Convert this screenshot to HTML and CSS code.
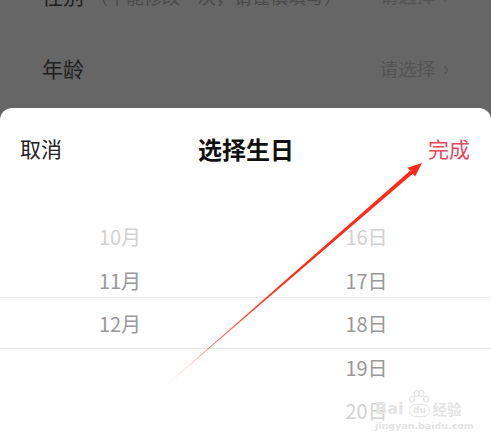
FILE: index.html
```html
<!DOCTYPE html>
<html lang="zh">
<head>
<meta charset="utf-8">
<link rel="stylesheet" href="styles.css">
</head>
<body>
<div class="backdrop">
  <div class="list">
    <div class="row">
      <span class="label">性别<span class="hint">（不能修改一次，请谨慎填写）</span></span>
      <span class="value">请选择<span class="chev">›</span></span>
    </div>
    <div class="row">
      <span class="label">年龄</span>
      <span class="value">请选择<span class="chev">›</span></span>
    </div>
  </div>
</div>
<div class="sheet">
  <div class="header">
    <span class="cancel">取消</span>
    <span class="title">选择生日</span>
    <span class="done">完成</span>
  </div>
  <div class="picker">
    <div class="col">
      <div class="item faint">10月</div>
      <div class="item">11月</div>
      <div class="item">12月</div>
    </div>
    <div class="col">
      <div class="item faint">16日</div>
      <div class="item">17日</div>
      <div class="item">18日</div>
      <div class="item">19日</div>
      <div class="item faint">20日</div>
    </div>
    <div class="band"></div>
  </div>
</div>
<div class="watermark">
  <div class="wm-top">
    <span class="wm-bai">Bai</span>
    <span class="wm-du">
      <svg class="paw" width="22" height="15" viewBox="0 0 22 15">
        <ellipse cx="4" cy="10" rx="2.4" ry="3" fill="none" stroke="#e4e4e4" stroke-width="1.2"/>
        <ellipse cx="8.5" cy="4.5" rx="2.4" ry="3" fill="none" stroke="#e4e4e4" stroke-width="1.2"/>
        <ellipse cx="13.5" cy="4.5" rx="2.4" ry="3" fill="none" stroke="#e4e4e4" stroke-width="1.2"/>
        <ellipse cx="18" cy="10" rx="2.4" ry="3" fill="none" stroke="#e4e4e4" stroke-width="1.2"/>
      </svg>
      <span class="du">du</span>
    </span>
    <span class="wm-cn">经验</span>
  </div>
  <div class="wm-url">jingyan.baidu.com</div>
</div>
<svg class="arrow" width="491" height="442" viewBox="0 0 491 442">
  <defs>
    <linearGradient id="g" gradientUnits="userSpaceOnUse" x1="155" y1="395" x2="412" y2="172">
      <stop offset="0" stop-color="#ff2a1a" stop-opacity="0"/>
      <stop offset="0.25" stop-color="#ff2a1a" stop-opacity="0.7"/>
      <stop offset="0.5" stop-color="#ff2a1a" stop-opacity="1"/>
      <stop offset="1" stop-color="#ff2a1a" stop-opacity="1"/>
    </linearGradient>
  </defs>
  <polygon points="155,395 413,173.6 410,170.8" fill="url(#g)"/>
  <polygon points="422,163 415.2,176.6 407.5,167.8" fill="#ff2a1a"/>
</svg>
</body>
</html>
```
FILE: styles.css
```css
html, body {
  margin: 0;
  padding: 0;
}
body {
  width: 491px;
  height: 442px;
  overflow: hidden;
  background: #666666;
  font-family: "Noto Sans CJK SC", "Noto Sans", sans-serif;
  position: relative;
}
.backdrop {
  height: 108px;
  overflow: hidden;
}
.list {
  margin-top: -42px;
  padding: 0 42px;
}
.row {
  height: 73px;
  display: flex;
  align-items: center;
  justify-content: space-between;
}
.label {
  font-size: 21px;
  color: #1e1e1e;
}
.hint {
  font-size: 18px;
  color: #4a4a4a;
  margin-left: 6px;
}
.value {
  font-size: 18.5px;
  color: #545454;
  display: flex;
  align-items: center;
}
.chev {
  font-size: 20px;
  margin-left: 8px;
}
.sheet {
  background: #ffffff;
  border-radius: 12px 12px 0 0;
  height: 334px;
}
.header {
  height: 80px;
  display: flex;
  align-items: center;
  justify-content: space-between;
  padding: 0 21px 0 20px;
}
.cancel {
  font-size: 21px;
  color: #222;
}
.title {
  font-size: 24px;
  font-weight: 700;
  color: #111;
  margin-left: 2px;
}
.done {
  font-size: 21px;
  color: #e5485d;
}
.picker {
  position: relative;
  padding-top: 27px;
  display: grid;
  grid-template-columns: 240px 251px;
}
.col {
  display: flex;
  flex-direction: column;
  align-items: center;
}
.col + .col {
  padding-left: 2px;
}
.item {
  height: 43.5px;
  line-height: 43.5px;
  font-size: 20px;
  color: #999999;
}
.item.faint {
  color: #d2d2d2;
}
.band {
  position: absolute;
  left: 0;
  right: 0;
  top: 109px;
  height: 50px;
  border-top: 1px solid #ebebeb;
  border-bottom: 1px solid #e6e6e6;
  pointer-events: none;
}
.watermark {
  position: absolute;
  left: 375px;
  top: 387px;
  color: #e4e4e4;
  font-family: "DejaVu Sans", sans-serif;
}
.wm-top {
  display: flex;
  align-items: flex-end;
  height: 30px;
}
.wm-bai {
  font-size: 16px;
  font-weight: 700;
  line-height: 16px;
}
.wm-du {
  display: flex;
  flex-direction: column;
  align-items: center;
  margin: 0 2px 0 5px;
}
.paw {
  display: block;
}
.du {
  font-size: 9px;
  font-weight: 700;
  line-height: 11px;
  border: 1.5px solid #e4e4e4;
  border-radius: 7px;
  padding: 0 3px;
}
.wm-cn {
  font-family: "Noto Sans CJK SC", sans-serif;
  font-size: 14.5px;
  font-weight: 700;
  line-height: 16px;
}
.wm-url {
  font-size: 9.5px;
  font-weight: 700;
  line-height: 12px;
  margin-top: 3px;
}
.arrow {
  position: absolute;
  left: 0;
  top: 0;
  pointer-events: none;
}
```
